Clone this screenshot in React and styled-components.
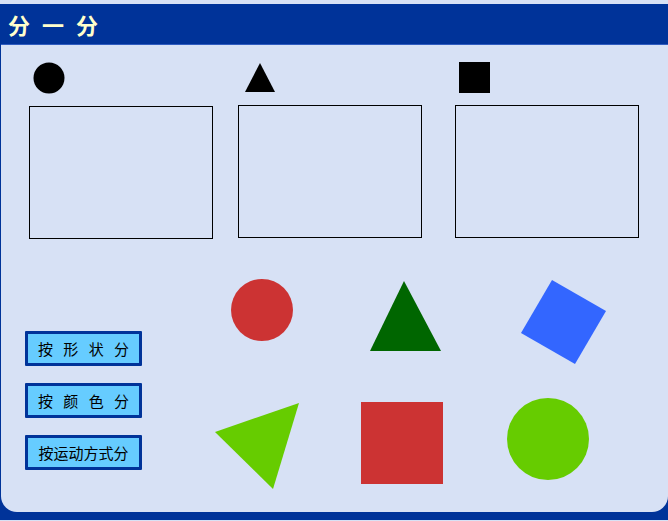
import styled, { createGlobalStyle } from "styled-components";

const GlobalStyle = createGlobalStyle`
  html, body {
    margin: 0;
    padding: 0;
    background: #d7e1f5;
    font-family: "Noto Sans CJK SC", "Noto Sans", sans-serif;
  }
`;

const targets = [
  { key: "circle", offset: 4 },
  { key: "triangle", offset: 7 },
  { key: "square", offset: 4 },
];

const sortButtons = [
  { label: "按 形 状 分", spaced: true },
  { label: "按 颜 色 分", spaced: true },
  { label: "按运动方式分", spaced: false },
];

function TargetIcon({ kind }) {
  if (kind === "circle")
    return (
      <svg width="32" height="32" viewBox="0 0 32 32">
        <circle cx="16" cy="16" r="15.5" fill="#000" />
      </svg>
    );
  if (kind === "triangle")
    return (
      <svg width="32" height="32" viewBox="0 0 32 32">
        <polygon points="15,1 30,30 0,30" fill="#000" />
      </svg>
    );
  return (
    <svg width="32" height="32" viewBox="0 0 32 32">
      <rect x="0" y="0" width="31" height="31" fill="#000" />
    </svg>
  );
}

function App() {
  return (
    <>
      <GlobalStyle />
      <Frame>
        <Header>
          <Title>分 一 分</Title>
        </Header>
        <Panel>
          <TargetRow>
            {targets.map((t) => (
              <TargetColumn key={t.key}>
                <IconSlot $offset={t.offset}>
                  <TargetIcon kind={t.key} />
                </IconSlot>
                <DropBox $lift={t.key !== "circle"} />
              </TargetColumn>
            ))}
          </TargetRow>

          <Workspace>
            <ButtonColumn>
              {sortButtons.map((b) => (
                <SortButton key={b.label} $spaced={b.spaced}>
                  {b.label}
                </SortButton>
              ))}
            </ButtonColumn>

            <ShapeGrid>
              <Cell>
                <svg width="142" height="112">
                  <circle cx="71" cy="45" r="31" fill="#cc3333" />
                </svg>
              </Cell>
              <Cell>
                <svg width="142" height="112">
                  <polygon points="71,16 37,86 108,86" fill="#006600" />
                </svg>
              </Cell>
              <Cell>
                <svg width="142" height="112">
                  <polygon points="77,15 131,46 100,99 46,68" fill="#3366ff" />
                </svg>
              </Cell>
              <Cell>
                <svg width="142" height="125">
                  <polygon points="24,55 108,26 82,112" fill="#66cc00" />
                </svg>
              </Cell>
              <Cell>
                <svg width="142" height="125">
                  <rect x="28" y="25" width="82" height="82" fill="#cc3333" />
                </svg>
              </Cell>
              <Cell>
                <svg width="142" height="125">
                  <circle cx="73" cy="62" r="41" fill="#66cc00" />
                </svg>
              </Cell>
            </ShapeGrid>
          </Workspace>
        </Panel>
      </Frame>
    </>
  );
}

export default App;

const Frame = styled.div`
  margin-top: 4px;
  width: 668px;
  background: #003399;
  padding: 0 0 8px 1px;
  box-sizing: border-box;
`;

const Header = styled.div`
  height: 41px;
  display: flex;
  align-items: center;
  padding-left: 7px;
  border-bottom: 1px solid #2f5cc0;
  box-sizing: border-box;
`;

const Title = styled.h1`
  margin: 0;
  color: #ffffcc;
  font-size: 22px;
  font-weight: 700;
  letter-spacing: 3.5px;
  white-space: pre;
`;

const Panel = styled.div`
  height: 467px;
  background: #d7e1f5;
  border-radius: 0 0 16px 16px;
  padding-top: 17px;
  box-sizing: border-box;
`;

const TargetRow = styled.div`
  display: grid;
  grid-template-columns: 209px 217px 184px;
  padding-left: 28px;
`;

const TargetColumn = styled.div`
  display: flex;
  flex-direction: column;
  align-items: flex-start;
`;

const IconSlot = styled.div`
  height: 32px;
  padding-left: ${(p) => p.$offset}px;
  margin-bottom: 12px;
  svg {
    display: block;
  }
`;

const DropBox = styled.div`
  width: 184px;
  height: 133px;
  border: 1px solid #000;
  box-sizing: border-box;
  margin-top: ${(p) => (p.$lift ? "-1px" : "0")};
`;

const Workspace = styled.div`
  display: flex;
  margin-top: 26px;
`;

const ButtonColumn = styled.div`
  width: 190px;
  padding: 66px 0 0 24px;
  display: flex;
  flex-direction: column;
  gap: 17px;
  box-sizing: border-box;
`;

const SortButton = styled.button`
  width: 117px;
  height: 35px;
  padding: 0;
  background: #66ccff;
  border: 3px solid #003399;
  border-radius: 1px;
  color: #000;
  font-family: "Noto Sans CJK SC", "Noto Sans", sans-serif;
  font-size: 15px;
  line-height: 29px;
  letter-spacing: ${(p) => (p.$spaced ? "3.5px" : "0")};
  text-indent: ${(p) => (p.$spaced ? "3.5px" : "0")};
  white-space: pre;
  cursor: pointer;
`;

const ShapeGrid = styled.div`
  display: grid;
  grid-template-columns: repeat(3, 142px);
  grid-template-rows: 112px 125px;
`;

const Cell = styled.div`
  svg {
    display: block;
  }
`;
